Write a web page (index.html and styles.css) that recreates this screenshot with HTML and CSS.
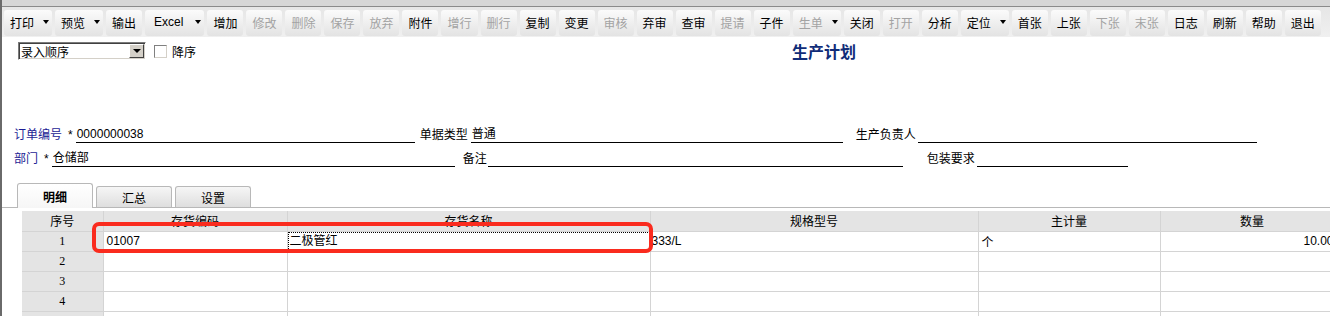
FILE: index.html
```html
<!doctype html>
<html>
<head>
<meta charset="utf-8">
<title>生产计划</title>
<link rel="stylesheet" href="styles.css">
</head>
<body>

<div class="toolbar">
	<span class="btn dd">打印<i></i></span>
	<span class="btn dd">预览<i></i></span>
	<span class="btn">输出</span>
	<span class="btn dd xl">Excel<i></i></span>
	<span class="btn">增加</span>
	<span class="btn off">修改</span>
	<span class="btn off">删除</span>
	<span class="btn off">保存</span>
	<span class="btn off">放弃</span>
	<span class="btn">附件</span>
	<span class="btn off">增行</span>
	<span class="btn off">删行</span>
	<span class="btn">复制</span>
	<span class="btn">变更</span>
	<span class="btn off">审核</span>
	<span class="btn">弃审</span>
	<span class="btn">查审</span>
	<span class="btn off">提请</span>
	<span class="btn">子件</span>
	<span class="btn dd off">生单<i></i></span>
	<span class="btn">关闭</span>
	<span class="btn off">打开</span>
	<span class="btn">分析</span>
	<span class="btn dd">定位<i></i></span>
	<span class="btn">首张</span>
	<span class="btn">上张</span>
	<span class="btn off">下张</span>
	<span class="btn off">末张</span>
	<span class="btn">日志</span>
	<span class="btn">刷新</span>
	<span class="btn">帮助</span>
	<span class="btn">退出</span>
</div>

<div class="page">
	<div class="sortbar">
		<div class="select"><span>录入顺序</span><b></b></div>
		<span class="chk"></span>
		<span class="chk-label">降序</span>
		<h1 class="title">生产计划</h1>
	</div>

	<div class="form-row">
		<label class="req">订单编号</label><em>*</em>
		<span class="field f-code">0000000038</span>
		<label class="l-type">单据类型</label>
		<span class="field f-type">普通</span>
		<label class="l-man">生产负责人</label>
		<span class="field f-man"></span>
	</div>
	<div class="form-row">
		<label class="req">部门</label><em>*</em>
		<span class="field f-dept">仓储部</span>
		<label class="l-memo">备注</label>
		<span class="field f-memo"></span>
		<label class="l-pack">包装要求</label>
		<span class="field f-pack"></span>
	</div>

	<div class="tabs">
		<span class="tab on">明细</span>
		<span class="tab">汇总</span>
		<span class="tab">设置</span>
	</div>

	<table class="grid">
		<colgroup>
			<col class="c-no"><col class="c-code"><col class="c-name"><col class="c-spec"><col class="c-unit"><col class="c-qty">
		</colgroup>
		<tr class="head">
			<th>序号</th><th>存货编码</th><th>存货名称</th><th>规格型号</th><th>主计量</th><th>数量</th>
		</tr>
		<tr>
			<td class="no">1</td><td>01007</td><td class="focus"><span>二极管红</span></td><td class="spec">333/L</td><td>个</td><td class="qty">10.00</td>
		</tr>
		<tr>
			<td class="no">2</td><td></td><td></td><td></td><td></td><td></td>
		</tr>
		<tr>
			<td class="no">3</td><td></td><td></td><td></td><td></td><td></td>
		</tr>
		<tr>
			<td class="no">4</td><td></td><td></td><td></td><td></td><td></td>
		</tr>
		<tr>
			<td class="no"></td><td></td><td></td><td></td><td></td><td></td>
		</tr>
	</table>
</div>

<div class="mark"></div>

</body>
</html>
```

FILE: styles.css
```css
* { margin: 0; padding: 0; box-sizing: border-box; }

body {
	width: 1330px;
	height: 316px;
	overflow: hidden;
	position: relative;
	background: #fff;
	color: #000;
	font: 12px "Liberation Sans", "Noto Sans CJK SC", sans-serif;
}

/* toolbar */
.toolbar {
	height: 37px;
	display: flex;
	gap: 3px;
	padding: 10px 0 0 2px;
	border-left: 2px solid #6a6a6a;
	background: linear-gradient(#d6d6d6 0, #d6d6d6 6px, #8a8a8a 6px, #8a8a8a 7px, #e6e6e6 7px, #f0f0f0 100%);
}
.btn {
	height: 26px;
	display: flex;
	align-items: center;
	padding: 0 6px 2px;
	border-radius: 3px;
	white-space: nowrap;
	background: linear-gradient(#fbfbfb, #e3e3e3);
}
.btn.off { color: #a3a3a3; }
.btn.dd { padding-right: 3px; }
.btn.xl { padding-left: 9px; }
.btn i {
	width: 0;
	height: 0;
	margin-left: 9px;
	border-top: 4px solid #000;
	border-left: 3px solid transparent;
	border-right: 3px solid transparent;
}
.btn.xl i { margin-left: 12px; }

/* page */
.page {
	height: 279px;
	overflow: hidden;
	border-left: 2px solid #6a6a6a;
}

.sortbar {
	display: flex;
	align-items: center;
	height: 18px;
	margin-top: 5px;
	padding-left: 16px;
}
.select {
	width: 128px;
	height: 18px;
	display: flex;
	align-items: center;
	justify-content: space-between;
	padding-left: 2px;
	border: 1px solid;
	border-color: #7b7b7b #fff #fff #7b7b7b;
	box-shadow: inset 1px 1px #404040, inset -1px -1px #d4d0c8;
}
.select b {
	width: 15px;
	height: 14px;
	margin-right: 1px;
	display: flex;
	align-items: center;
	justify-content: center;
	background: #d4d0c8;
	border: 1px solid;
	border-color: #fff #404040 #404040 #fff;
}
.select b::after {
	content: "";
	border-top: 4px solid #000;
	border-left: 4px solid transparent;
	border-right: 4px solid transparent;
}
.chk {
	width: 13px;
	height: 13px;
	margin-left: 8px;
	border: 1px solid;
	border-color: #808080 #d4d0c8 #d4d0c8 #808080;
}
.chk-label { margin-left: 5px; }
.title {
	margin-left: 596px;
	font-size: 16px;
	font-weight: bold;
	color: #102c78;
}

/* header form */
.form-row {
	display: flex;
	align-items: flex-end;
	height: 16px;
	padding-left: 12px;
	margin-top: 8px;
}
.sortbar + .form-row { margin-top: 67px; }
.form-row label { white-space: nowrap; line-height: 16px; }
.form-row .req { color: #1c1c94; }
.form-row em {
	font-style: normal;
	margin-left: 6px;
	line-height: 16px;
}
.field {
	height: 16px;
	line-height: 15px;
	padding-left: 1px;
	border-bottom: 1px solid #000;
}
.f-code { margin-left: 3px; width: 339px; }
.l-type { margin-left: 5px; }
.f-type { margin-left: 3px; width: 372px; }
.l-man { margin-left: 13px; }
.f-man { margin-left: 2px; width: 339px; }
.f-dept { margin-left: 3px; width: 403px; }
.l-memo { margin-left: 8px; }
.f-memo { margin-left: 1px; width: 415px; }
.l-pack { margin-left: 24px; }
.f-pack { margin-left: 2px; width: 151px; }

/* tabs */
.tabs {
	display: flex;
	align-items: flex-end;
	gap: 3px;
	height: 25px;
	margin-top: 16px;
	padding-left: 15px;
	border-bottom: 1px solid #b8b8b8;
}
.tab {
	width: 76px;
	height: 21px;
	display: flex;
	align-items: center;
	justify-content: center;
	border: 1px solid #b8b8b8;
	border-bottom: none;
	border-radius: 3px 3px 0 0;
	background: linear-gradient(#f6f6f6, #dedede);
}
.tab.on {
	height: 25px;
	margin-bottom: -1px;
	font-weight: bold;
	background: linear-gradient(#fff, #f6f6f6);
}

/* grid */
.grid {
	margin: 3px 0 0 20px;
	width: 1322px;
	table-layout: fixed;
	border-collapse: collapse;
}
.c-no { width: 81px; }
.c-code { width: 184px; }
.c-name { width: 363px; }
.c-spec { width: 328px; }
.c-unit { width: 182px; }
.c-qty { width: 184px; }
.grid tr { height: 20px; }
.grid th, .grid td {
	border: 1px solid #d4d4d4;
	white-space: nowrap;
	overflow: hidden;
}
.grid tr:first-child th { border-top: none; }
.grid th:first-child, .grid td:first-child { border-left: none; }
.grid th {
	font-weight: normal;
	background: #e4e4e4;
}
.grid td { padding: 0 3px; }
.grid td.spec { padding-left: 1px; }
.grid td.no {
	text-align: center;
	background: #e4e4e4;
	font-family: "Liberation Serif", serif;
}
.grid td.focus { padding: 0; }
.grid td.focus span {
	display: block;
	height: 19px;
	line-height: 17px;
	padding-left: 1px;
	border: 1px dotted #000;
}
.grid td.qty { text-align: right; padding-right: 10px; }

/* red annotation frame */
.mark {
	position: absolute;
	left: 92px;
	top: 222px;
	width: 561px;
	height: 31px;
	border: 4px solid #fa2b1e;
	border-radius: 7px;
}
```
